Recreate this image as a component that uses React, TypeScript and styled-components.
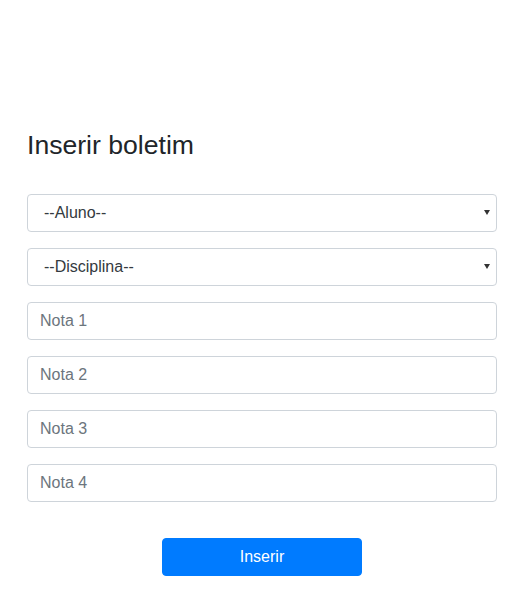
import React from "react";
import styled, { createGlobalStyle } from "styled-components";

const Global = createGlobalStyle`
  html, body { margin: 0; padding: 0; background: #fff; }
  body { font-family: "Liberation Sans", Arial, Helvetica, sans-serif; color: #212529; }
  * { box-sizing: border-box; }
`;

const Page = styled.div`
  padding: 130px 32px 40px 27px;
`;

const Title = styled.h3`
  margin: 0 0 32px;
  font-size: 26.6px;
  font-weight: 400;
  line-height: 1.2;
  color: #212529;
`;

const Form = styled.form`
  display: flex;
  flex-direction: column;
  gap: 16px;
`;

const controlCss = `
  display: block;
  width: 100%;
  height: 38px;
  padding: 6px 12px;
  font-family: "Liberation Sans", Arial, Helvetica, sans-serif;
  font-size: 16px;
  line-height: 1.5;
  color: #495057;
  background-color: #fff;
  border: 1px solid #ced4da;
  border-radius: 4px;
  outline: none;
  margin: 0;
`;

const arrow =
  "url(\"data:image/svg+xml;utf8,<svg xmlns='http://www.w3.org/2000/svg' width='6' height='5' viewBox='0 0 6 5'><path d='M0 0H6L3 5Z' fill='%23333'/></svg>\")";

const Select = styled.select`
  ${controlCss}
  appearance: none;
  -webkit-appearance: none;
  padding-left: 16px;
  padding-right: 24px;
  color: #343a40;
  background-image: ${arrow};
  background-repeat: no-repeat;
  background-position: right 6px center;
  background-size: 6px 5px;
`;

const Input = styled.input`
  ${controlCss}
  &::placeholder { color: #6c757d; opacity: 1; }
`;

const Actions = styled.div`
  display: flex;
  justify-content: center;
  margin-top: 20px;
`;

const Button = styled.button`
  width: 200px;
  height: 38px;
  padding: 6px 12px;
  font-family: "Liberation Sans", Arial, Helvetica, sans-serif;
  font-size: 16px;
  line-height: 1.5;
  color: #fff;
  background: #007bff;
  border: 1px solid #007bff;
  border-radius: 4px;
  cursor: pointer;
`;

export default function App() {
  return (
    <>
      <Global />
      <Page>
        <Title>Inserir boletim</Title>
        <Form onSubmit={(e) => e.preventDefault()}>
          <Select defaultValue="">
            <option value="">--Aluno--</option>
          </Select>
          <Select defaultValue="">
            <option value="">--Disciplina--</option>
          </Select>
          <Input type="text" placeholder="Nota 1" />
          <Input type="text" placeholder="Nota 2" />
          <Input type="text" placeholder="Nota 3" />
          <Input type="text" placeholder="Nota 4" />
          <Actions>
            <Button type="submit">Inserir</Button>
          </Actions>
        </Form>
      </Page>
    </>
  );
}
